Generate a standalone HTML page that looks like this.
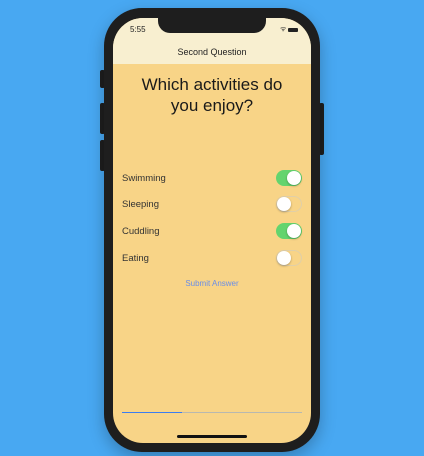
<!DOCTYPE html>
<html><head><style>
body{margin:0;width:424px;height:456px;background:#48a8f2;position:relative;overflow:hidden;font-family:"Liberation Sans",sans-serif}
.btn{position:absolute;background:#1e1e1e;border-radius:2px}
.frame{position:absolute;left:104px;top:8px;width:216px;height:444px;background:#1e1e1e;border-radius:38px;box-shadow:0 6px 16px rgba(0,0,0,.25)}
.screen{position:absolute;left:113px;top:18px;width:198px;height:425px;border-radius:30px;background:#f8d487;overflow:hidden}
.nav{position:absolute;left:0;top:0;width:198px;height:46px;background:#f8efd0}
.notch{position:absolute;left:45px;top:0;width:108px;height:15px;background:#1e1e1e;border-radius:0 0 12px 12px}
.t{position:absolute;font-size:9px;color:#222}
.lab{position:absolute;left:9px;font-size:9.5px;color:#333}
.tg{position:absolute;left:163px;width:26px;height:16px;border-radius:8px;box-sizing:border-box}
.on{background:#64d46e}
.off{border:1px solid #e0cfa8;background:#f8d487}
.k{position:absolute;top:1px;width:14px;height:14px;border-radius:7px;background:#fff;box-shadow:0 1px 2px rgba(0,0,0,.3)}
</style></head><body>
<div class="btn" style="left:100px;top:70px;width:5px;height:18px"></div>
<div class="btn" style="left:100px;top:103px;width:5px;height:31px"></div>
<div class="btn" style="left:100px;top:140px;width:5px;height:31px"></div>
<div class="btn" style="left:319px;top:103px;width:5px;height:52px"></div>
<div class="frame"></div>
<div class="screen">
<div class="nav"></div>
<div class="notch"></div>
<div class="t" style="left:17px;top:7px;font-size:8px">5:55</div>
<div class="t" style="left:167px;top:7px;font-size:7px">ᯤ</div>
<div style="position:absolute;left:175px;top:10px;width:10px;height:4px;background:#222;border-radius:1px"></div>
<div class="t" style="left:0;width:198px;text-align:center;top:29px;font-size:9px">Second Question</div>
<div style="position:absolute;left:0;width:198px;text-align:center;top:56px;font-size:17px;line-height:21px;color:#1a1a1a">Which activities do<br>you enjoy?</div>
<div class="lab" style="top:155px">Swimming</div>
<div class="tg on" style="top:152px"><div class="k" style="left:11px"></div></div>
<div class="lab" style="top:181px">Sleeping</div>
<div class="tg off" style="top:178px"><div class="k" style="left:0;top:0"></div></div>
<div class="lab" style="top:208px">Cuddling</div>
<div class="tg on" style="top:205px"><div class="k" style="left:11px"></div></div>
<div class="lab" style="top:235px">Eating</div>
<div class="tg off" style="top:232px"><div class="k" style="left:0;top:0"></div></div>
<div style="position:absolute;left:0;width:198px;text-align:center;top:261px;font-size:8px;color:#6a8ee8">Submit Answer</div>
<div style="position:absolute;left:9px;top:394px;width:180px;height:1px;background:#b8b8b0"></div>
<div style="position:absolute;left:9px;top:394px;width:60px;height:1px;background:#3b7df0"></div>
<div style="position:absolute;left:64px;top:417px;width:70px;height:3px;border-radius:2px;background:#111"></div>
</div>
</body></html>
